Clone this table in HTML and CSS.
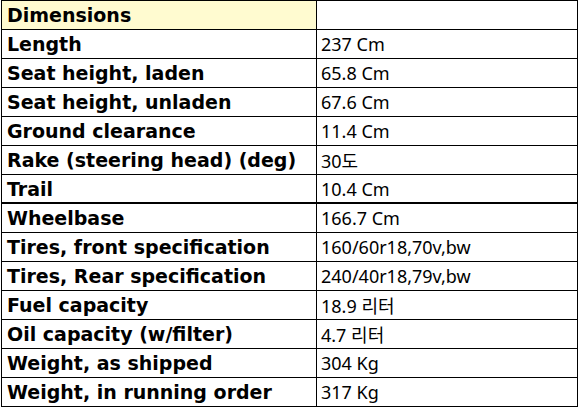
FILE: index.html
```html
<!DOCTYPE html>
<html>
<head>
<meta charset="utf-8">
<link rel="stylesheet" href="styles.css">
</head>
<body>
<table class="spec">
  <tr class="head"><td class="label">Dimensions</td><td class="value empty"></td></tr>
  <tr><td class="label">Length</td><td class="value">237 Cm</td></tr>
  <tr><td class="label">Seat height, laden</td><td class="value">65.8 Cm</td></tr>
  <tr><td class="label">Seat height, unladen</td><td class="value">67.6 Cm</td></tr>
  <tr><td class="label">Ground clearance</td><td class="value">11.4 Cm</td></tr>
  <tr><td class="label">Rake (steering head) (deg)</td><td class="value">30도</td></tr>
  <tr class="short"><td class="label">Trail</td><td class="value">10.4 Cm</td></tr>
  <tr class="sep"><td class="label">Wheelbase</td><td class="value">166.7 Cm</td></tr>
  <tr><td class="label">Tires, front specification</td><td class="value">160/60r18,70v,bw</td></tr>
  <tr><td class="label">Tires, Rear specification</td><td class="value">240/40r18,79v,bw</td></tr>
  <tr><td class="label">Fuel capacity</td><td class="value">18.9 리터</td></tr>
  <tr><td class="label">Oil capacity (w/filter)</td><td class="value">4.7 리터</td></tr>
  <tr><td class="label">Weight, as shipped</td><td class="value">304 Kg</td></tr>
  <tr><td class="label">Weight, in running order</td><td class="value">317 Kg</td></tr>
</table>
</body>
</html>
```
FILE: styles.css
```css
html, body {
  margin: 0;
  padding: 0;
  background: #ffffff;
}
body {
  padding: 0 0 0 1px;
}
.spec {
  border-collapse: collapse;
  width: 577px;
  table-layout: fixed;
}
.spec td {
  border: 1px solid #000;
  height: 28px;
  padding: 0 0 0 5px;
  vertical-align: middle;
  color: #000;
  white-space: nowrap;
  overflow: hidden;
}
.spec .label {
  width: 309px;
  font-family: "DejaVu Sans", Verdana, sans-serif;
  font-weight: bold;
  font-size: 19px;
}
.spec .value {
  font-family: "Noto Sans", "Noto Sans CJK KR", sans-serif;
  font-size: 18px;
  padding-left: 4px;
}
.spec .head .label {
  background: #fffbd0;
}
.spec .short td {
  height: 27px;
}
.spec .sep td {
  border-top-width: 2px;
}
```
